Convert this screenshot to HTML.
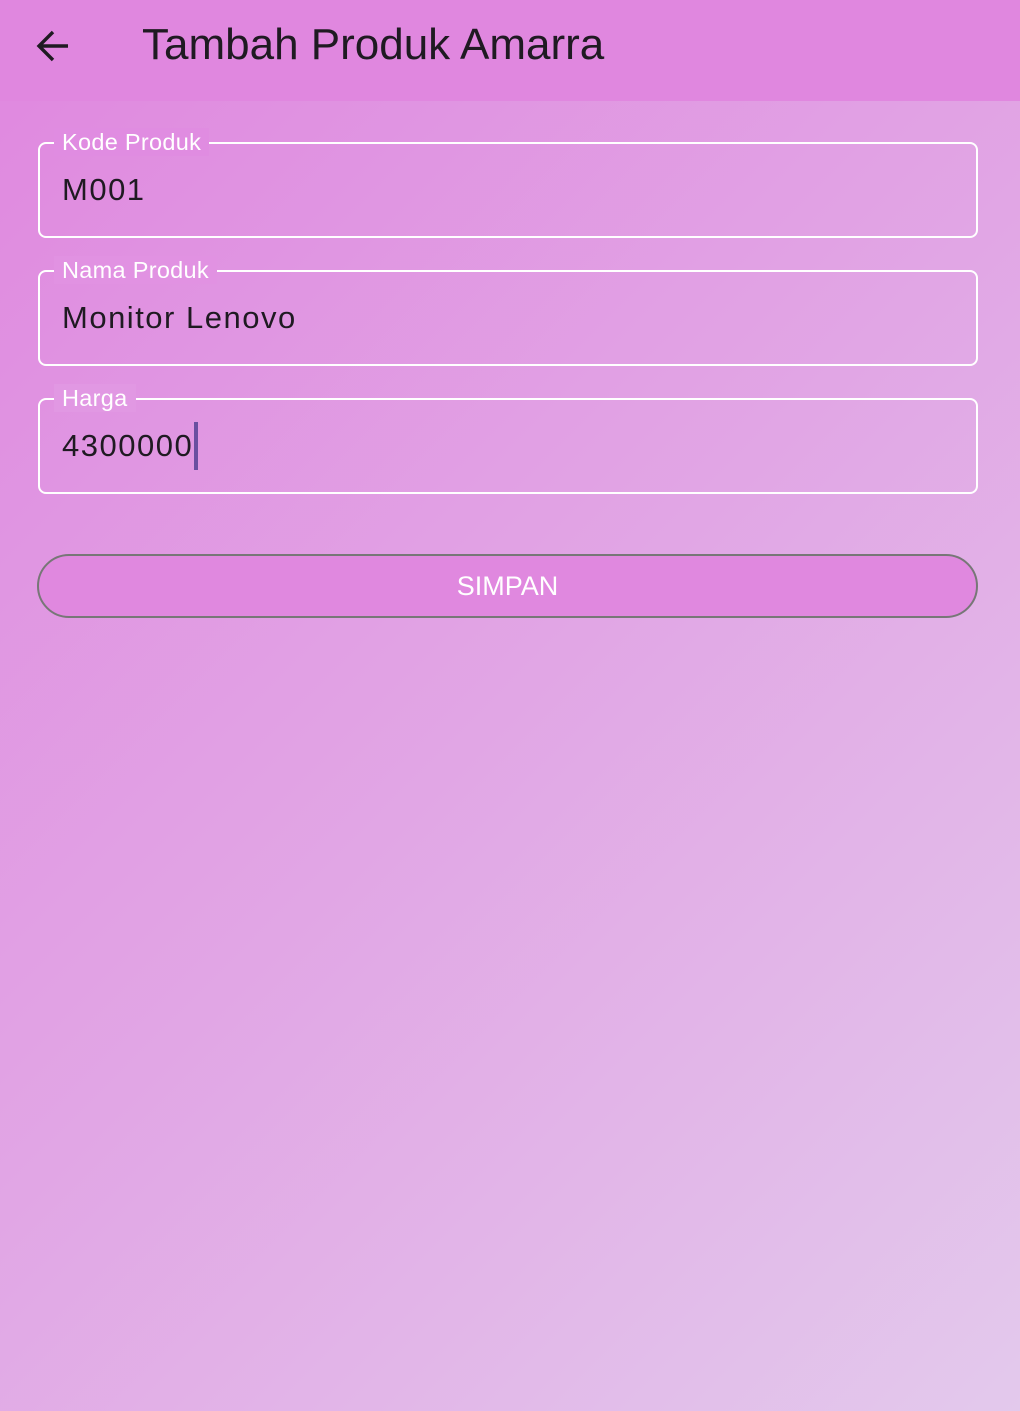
<!DOCTYPE html><html><head><style>
body{margin:0;width:1020px;height:1411px;overflow:hidden;font-family:"Liberation Sans",sans-serif;background:linear-gradient(135deg,#e087df 0%,#e1a6e5 50%,#e3c9ec 100%);position:relative}
.bar{position:absolute;left:0;top:0;width:1020px;height:101px;background:#e087df}
.title{position:absolute;left:142px;top:20px;font-size:44px;color:#1f1a22;line-height:50px}
.f{position:absolute;left:38px;width:936px;height:92px;border:2px solid #fff;border-radius:8px}
.lab{position:absolute;left:14px;top:-16px;padding:0 8px;font-size:23.5px;color:#fff;line-height:28px;letter-spacing:0.3px}
.val{position:absolute;left:22px;top:28px;font-size:31px;color:#1f1a22;letter-spacing:1.5px;line-height:36px}
.btn{position:absolute;left:37px;top:554px;width:937px;height:60px;border:2px solid #777;border-radius:32px;background:#e088df;color:#fff;font-size:27px;text-align:center;line-height:60px}
</style></head><body>
<div class="bar"></div>
<svg style="position:absolute;left:34px;top:28px" width="38" height="36" viewBox="0 0 38 36"><path d="M34 18H5M19 4L5 18l14 14" stroke="#1f1a22" stroke-width="3.4" fill="none"/></svg>
<div class="title">Tambah Produk Amarra</div>
<div class="f" style="top:142px"><span class="lab" style="background:#e08ce1">Kode Produk</span><span class="val">M001</span></div>
<div class="f" style="top:270px"><span class="lab" style="background:#e192e2">Nama Produk</span><span class="val">Monitor Lenovo</span></div>
<div class="f" style="top:398px"><span class="lab" style="background:#e198e3">Harga</span><span class="val">4300000</span><span style="position:absolute;left:154px;top:22px;width:4px;height:48px;background:#6a4fa0"></span></div>
<div class="btn">SIMPAN</div>
</body></html>
